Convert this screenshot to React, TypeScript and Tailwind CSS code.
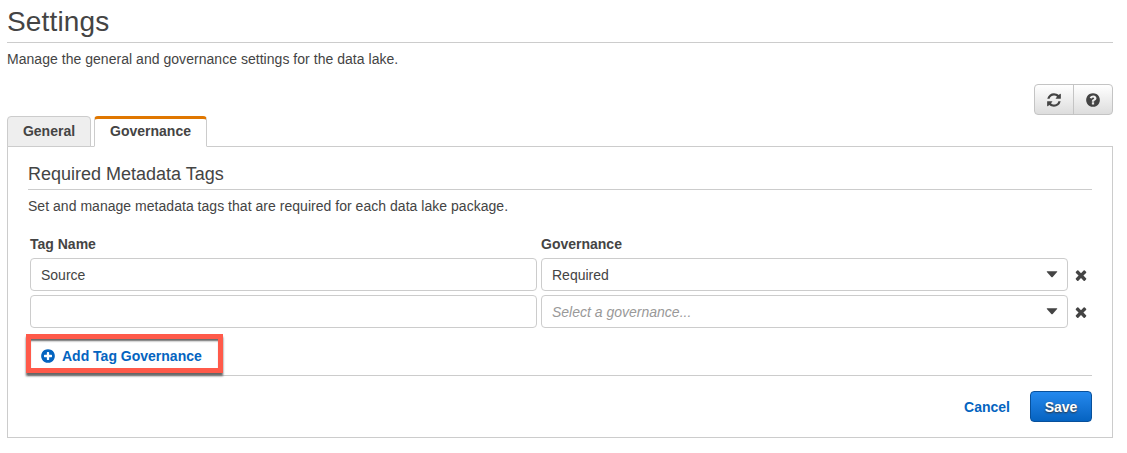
import type { ReactNode } from "react";

const circle =
  "m384 192q0 209-103 385.5t-279.5 279.5-385.5 103-385.5-103-279.5-279.5-103-385.5 103-385.5 279.5-279.5 385.5-103 385.5 103 279.5 279.5 103 385.5z";

const icons = {
  refresh:
    "M1639 1056q0 5-1 7-64 268-268 434.5t-478 166.5q-146 0-282.5-55t-243.5-157l-129 129q-19 19-45 19t-45-19-19-45v-448q0-26 19-45t45-19h448q26 0 45 19t19 45-19 45l-137 137q71 66 161 102t187 36q134 0 250-65t186-179q11-17 53-117 8-23 30-23h192q13 0 22.5 9.5t9.5 22.5zm25-800v448q0 26-19 45t-45 19h-448q-26 0-45-19t-19-45 19-45l138-138q-148-137-349-137-134 0-250 65t-186 179q-11 17-53 117-8 23-30 23h-199q-13 0-22.5-9.5t-9.5-22.5v-7q65-268 270-434.5t480-166.5q146 0 284 55.5t245 156.5l130-129q19-19 45-19t45 19 19 45z",
  help:
    "M1024 1376v-192q0-14-9-23t-23-9h-192q-14 0-23 9t-9 23v192q0 14 9 23t23 9h192q14 0 23-9t9-23zm256-672q0-88-55.5-163t-138.5-116-170-41q-243 0-371 213-15 24 8 42l132 100q7 6 19 6 16 0 25-12 53-68 86-92 34-24 86-24 48 0 85.5 26t37.5 59q0 38-20 61t-68 45q-63 28-115.5 86.5t-52.5 125.5v36q0 14 9 23t23 9h192q14 0 23-9t9-23q0-19 21.5-49.5t54.5-49.5q32-18 49-28.5t46-35 44.5-48 28-60.5 12.5-81z" +
    circle,
  plus:
    "M1344 960v-128q0-26-19-45t-45-19h-256v-256q0-26-19-45t-45-19h-128q-26 0-45 19t-19 45v256h-256q-26 0-45 19t-19 45v128q0 26 19 45t45 19h256v256q0 26 19 45t45 19h128q26 0 45-19t19-45v-256h256q26 0 45-19t19-45zm320-64q0 209-103 385.5t-279.5 279.5-385.5 103-385.5-103-279.5-279.5-103-385.5 103-385.5 279.5-279.5 385.5-103 385.5 103 279.5 279.5 103 385.5z",
  times:
    "M1490 1322q0 40-28 68l-136 136q-28 28-68 28t-68-28l-294-294-294 294q-28 28-68 28t-68-28l-136-136q-28-28-28-68t28-68l294-294-294-294q-28-28-28-68t28-68l136-136q28-28 68-28t68 28l294 294 294-294q28-28 68-28t68 28l136 136q28 28 28 68t-28 68l-294 294 294 294q28 28 28 68z",
};

function Icon({ name, className }: { name: keyof typeof icons; className: string }) {
  return (
    <svg viewBox="0 0 1792 1792" fill="currentColor" className={className} aria-hidden="true">
      <path d={icons[name]} />
    </svg>
  );
}

function TagRow({ name, children }: { name: string; children: ReactNode }) {
  return (
    <div className="flex h-[33px] items-center">
      <div className="flex h-[33px] w-[507px] items-center rounded-[4px] border border-[#cccccc] px-2.5">{name}</div>
      <div className="ml-1 flex h-[33px] w-[527px] items-center justify-between rounded-[4px] border border-[#cccccc] pr-[9px] pl-2.5">
        {children}
        <svg viewBox="0 0 12 7" className="h-[7px] w-3 fill-[#444444]" aria-hidden="true">
          <path d="M1.2 .3h9.6q.9 0 .3.8L6.7 6q-.7.7-1.4 0L.9 1.100Q.3.300 1.200.300z" />
        </svg>
      </div>
      <button className="ml-[5px]" aria-label="Remove">
        <Icon name="times" className="size-4" />
      </button>
    </div>
  );
}

export default function App() {
  return (
    <main className="h-[453px] bg-white pr-[14px] pl-[7px] font-['Liberation_Sans',Arial,sans-serif] text-[14px] leading-5 text-[#444444]">
      <h1 className="h-[43px] border-b border-[#cccccc] pt-1 text-[28px] leading-9 tracking-[0.15px]">Settings</h1>
      <p className="pt-1.5 tracking-[0.035px]">Manage the general and governance settings for the data lake.</p>

      <div className="mt-[15px] flex justify-end">
        <div className="flex h-[31px] w-[79px] rounded-[4px] border border-[#c4c4c4] bg-linear-to-b from-white to-[#dddddd]">
          <button className="flex w-[39px] items-center justify-center border-r border-[#c4c4c4]" aria-label="Refresh">
            <Icon name="refresh" className="size-4" />
          </button>
          <button className="flex flex-1 items-center justify-center" aria-label="Help">
            <Icon name="help" className="size-4" />
          </button>
        </div>
      </div>

      <div className="flex h-8 items-start gap-[3px] font-bold">
        <button className="mt-px h-[31px] w-[84px] rounded-t-[4px] border border-[#cccccc] bg-[#eeeeee] pb-px">General</button>
        <button className="z-10 mt-px h-[31px] w-[113px] rounded-t-[4px] border border-t-[3px] border-[#cccccc] border-t-[#e07700] border-b-white bg-white pb-[3px]">
          Governance
        </button>
      </div>

      <section className="-mt-px h-[292px] border border-[#cccccc] px-5">
        <h2 className="h-[43px] border-b border-[#cccccc] pt-[15px] text-[18px] leading-6">Required Metadata Tags</h2>
        <p className="pt-1.5 tracking-[0.03px]">Set and manage metadata tags that are required for each data lake package.</p>
        <div className="mt-[18px] flex pl-0.5 font-bold">
          <div className="w-[511px]">Tag Name</div>
          <div>Governance</div>
        </div>
        <div className="mt-1 flex flex-col gap-1 pl-0.5">
          <TagRow name="Source">
            <span>Required</span>
          </TagRow>
          <TagRow name="">
            <span className="text-[#999999] italic">Select a governance...</span>
          </TagRow>
        </div>
        <div className="mt-1.5 h-[42px] border-b border-[#cccccc]">
          <button className="relative -ml-0.5 flex h-[39px] w-[197px] items-center border-[5px] border-[#ff5a4a] pt-1 pl-[9px] font-bold text-[#0464c0] shadow-[0_3px_2px_#666666,inset_0_3px_2px_-1px_#666666]">
            <Icon name="plus" className="mr-1.5 size-4" />
            Add Tag Governance
          </button>
        </div>
        <div className="mt-[15px] flex items-center justify-end font-bold">
          <button className="mr-5 text-[#0464c0]">Cancel</button>
          <button className="h-[31px] w-[62px] rounded-[4px] border border-[#08509b] bg-linear-to-b from-[#2489ee] to-[#0563c1] text-white [text-shadow:0_1px_2px_#333333]">
            Save
          </button>
        </div>
      </section>
    </main>
  );
}
